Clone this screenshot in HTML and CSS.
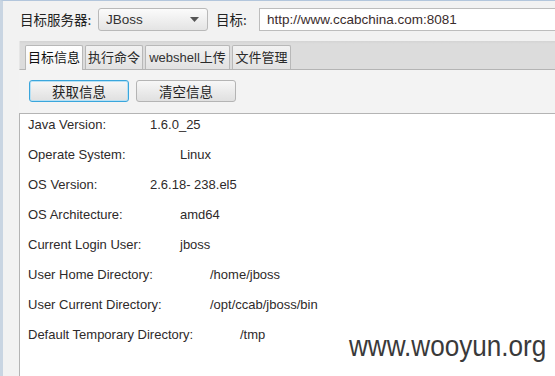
FILE: index.html
```html
<!DOCTYPE html>
<html>
<head>
<meta charset="utf-8">
<link rel="stylesheet" href="styles.css">
</head>
<body>
<div class="window">
  <div class="topbar">
    <span class="lbl lbl-server">目标服务器:</span>
    <div class="select">
      <span class="select-text">JBoss</span>
      <svg class="arrow" width="9" height="5" viewBox="0 0 9 5"><path d="M0 0H9L4.5 5Z" fill="#555"/></svg>
    </div>
    <span class="lbl lbl-target">目标:</span>
    <div class="input">http://www.ccabchina.com:8081</div>
  </div>
  <div class="pane">
    <div class="tabs">
      <div class="tab active w58">目标信息</div>
      <div class="tab w58">执行命令</div>
      <div class="tab w85"><span class="latin">webshell</span>上传</div>
      <div class="tab w59">文件管理</div>
    </div>
    <div class="toolbar">
      <button class="btn focus">获取信息</button>
      <button class="btn">清空信息</button>
    </div>
    <div class="content">
      <div class="row"><span class="key k122">Java Version:</span><span class="val">1.6.0_25</span></div>
      <div class="row"><span class="key k152">Operate System:</span><span class="val">Linux</span></div>
      <div class="row"><span class="key k122">OS Version:</span><span class="val">2.6.18- 238.el5</span></div>
      <div class="row"><span class="key k152">OS Architecture:</span><span class="val">amd64</span></div>
      <div class="row"><span class="key k152">Current Login User:</span><span class="val">jboss</span></div>
      <div class="row"><span class="key k182">User Home Directory:</span><span class="val">/home/jboss</span></div>
      <div class="row"><span class="key k182">User Current Directory:</span><span class="val">/opt/ccab/jboss/bin</span></div>
      <div class="row"><span class="key k212">Default Temporary Directory:</span><span class="val">/tmp</span></div>
    </div>
  </div>
  <div class="watermark">www.wooyun.org</div>
</div>
</body>
</html>
```
FILE: styles.css
```css
* { box-sizing: border-box; }
html, body { margin: 0; padding: 0; }
body {
  width: 555px;
  height: 376px;
  overflow: hidden;
  background: #f2f2f2;
  font-family: "Liberation Sans", "Noto Sans CJK SC", sans-serif;
  font-size: 13px;
  color: #2b2b2b;
}
.window {
  position: relative;
  width: 555px;
  height: 376px;
  border-top: 1px solid #b3c6dc;
  border-left: 3px solid #c9d5e2;
  overflow: hidden;
}
.topbar {
  height: 40px;
  padding: 7px 0 0 17px;
  display: flex;
  align-items: flex-start;
  white-space: nowrap;
}
.topbar > * { flex-shrink: 0; }
.lbl {
  font-family: "Noto Sans CJK SC", sans-serif;
  font-size: 13.5px;
  line-height: 23px;
  color: #222;
}
.lbl-server { width: 78px; }
.lbl-target { width: 43px; margin-left: 8px; }
.select {
  width: 110px;
  height: 23px;
  border: 1px solid #b9b9b9;
  border-radius: 3px;
  background: linear-gradient(#fbfbfb, #e4e4e4);
  display: flex;
  align-items: center;
  justify-content: space-between;
  padding: 0 8px 0 7px;
}
.select-text { font-size: 13.5px; color: #333; }
.arrow { display: block; }
.input {
  width: 320px;
  height: 23px;
  border: 1px solid #bdbdbd;
  border-right: none;
  background: #fff;
  padding-left: 7px;
  line-height: 21px;
  font-size: 13.5px;
  color: #3a2c2c;
}
.pane {
  margin-left: 16px;
}
.tabs {
  height: 29px;
  padding: 4px 0 0 5px;
  background: linear-gradient(#d4d4d4, #dcdcdc 3px, #dcdcdc);
  border-bottom: 1px solid #b4b4b4;
  border-left: 1px solid #e6e6e6;
  display: flex;
  gap: 2px;
}
.tab {
  flex-shrink: 0;
  height: 24px;
  border: 1px solid #b8b8b8;
  border-bottom: none;
  border-radius: 2px 2px 0 0;
  background: linear-gradient(#f2f2f2, #e2e2e2);
  font-family: "Noto Sans CJK SC", sans-serif;
  font-size: 13px;
  line-height: 22px;
  text-align: center;
  color: #2a2a2a;
  white-space: nowrap;
}
.tab .latin { font-family: "Liberation Sans", sans-serif; font-size: 13px; color: #333; }
.tab.active {
  height: 25px;
  margin-bottom: -1px;
  background: linear-gradient(#ffffff, #f4f4f4);
  color: #111;
}
.w58 { width: 58px; }
.w85 { width: 85px; }
.w59 { width: 59px; }
.toolbar {
  height: 43px;
  padding: 10px 0 0 10px;
  background: #f3f3f3;
  display: flex;
  gap: 7px;
  align-items: flex-start;
}
.btn {
  flex-shrink: 0;
  width: 100px;
  height: 22px;
  margin: 0;
  padding: 0;
  border: 1px solid #b4b4b4;
  border-radius: 3px;
  background: linear-gradient(#f7f7f7, #e0e0e0);
  font-family: "Noto Sans CJK SC", sans-serif;
  font-size: 13.5px;
  line-height: 20px;
  color: #222;
}
.btn.focus {
  border: 1px solid #3aa6dc;
  box-shadow: inset 0 0 0 1px #b7e0f4;
}
.content {
  height: 300px;
  background: #fff;
  border-top: 1px solid #b4b4b4;
  border-left: 1px solid #b4b4b4;
  padding: 1px 0 0 8px;
}
.row {
  display: flex;
  height: 20px;
  line-height: 20px;
  margin-bottom: 10px;
  font-size: 13px;
  color: #2e2a2a;
  white-space: nowrap;
}
.key { flex-shrink: 0; }
.k122 { width: 122px; }
.k152 { width: 152px; }
.k182 { width: 182px; }
.k212 { width: 212px; }
.watermark {
  position: absolute;
  left: 346px;
  top: 327px;
  font-family: "Liberation Sans", sans-serif;
  font-size: 30px;
  line-height: 36px;
  color: #3a3a3a;
  white-space: nowrap;
  transform: scaleX(0.87);
  transform-origin: 0 0;
}
```
